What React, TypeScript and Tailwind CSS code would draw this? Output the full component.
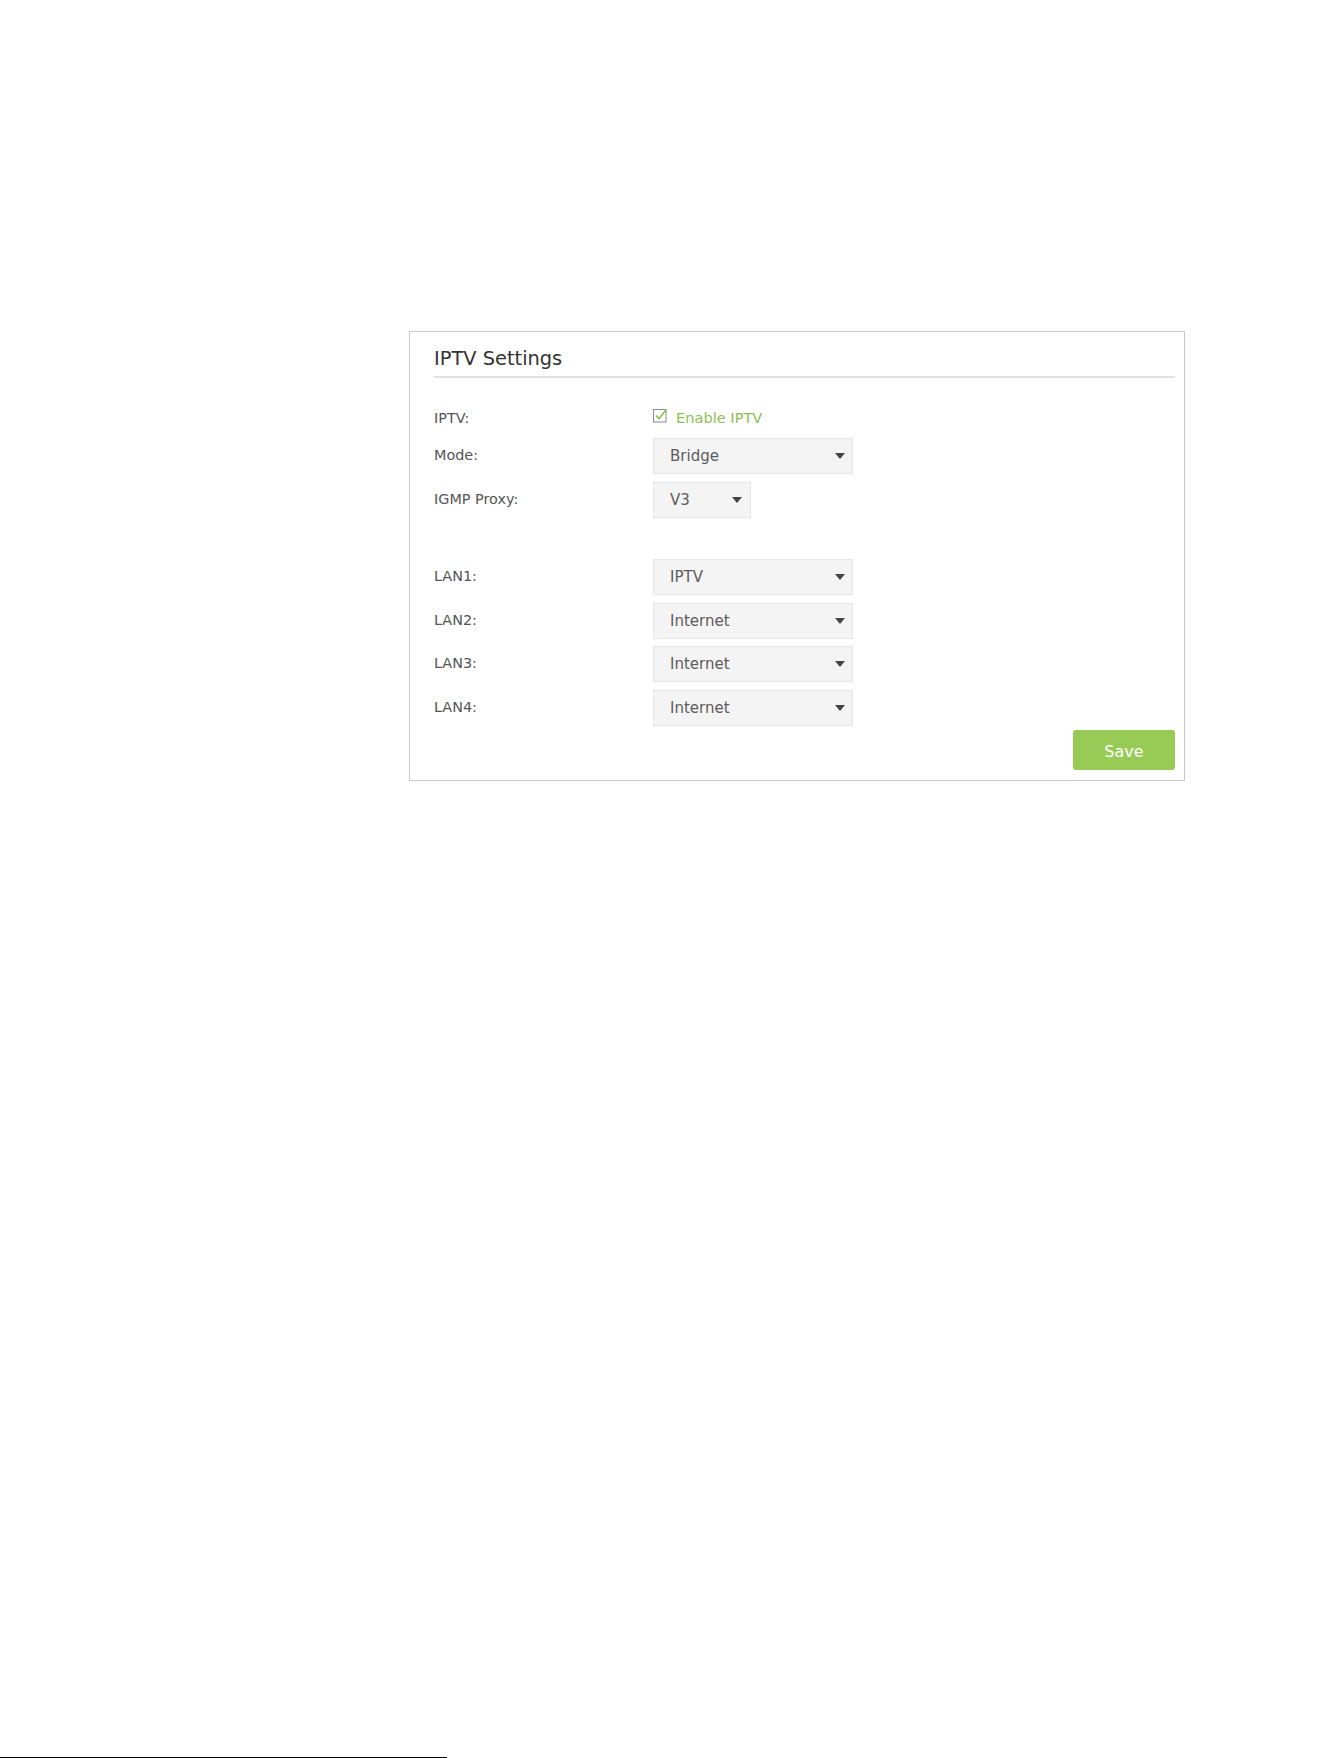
import React from "react";

const font = { fontFamily: '"DejaVu Sans", Verdana, sans-serif' };

function Arrow() {
  return (
    <svg width="10" height="6" viewBox="0 0 10 6" className="shrink-0">
      <path d="M0 0 L10 0 L5 6 Z" fill="#444" />
    </svg>
  );
}

function Select({ value, wide = true }: { value: string; wide?: boolean }) {
  return (
    <div
      className={`flex h-[36px] items-center justify-between border border-[#e6e6e6] bg-[#f4f4f4] pl-[16px] ${
        wide ? "w-[200px] pr-[7px]" : "w-[98px] pr-[8px]"
      }`}
    >
      <span className="text-[15px] text-[#5c5c5c]">{value}</span>
      <Arrow />
    </div>
  );
}

function Row({ label, children, className = "" }: { label: string; children: React.ReactNode; className?: string }) {
  return (
    <div className={`flex h-[36px] items-center ${className}`}>
      <div className="w-[219px] shrink-0 text-[14.4px] text-[#555]">{label}</div>
      {children}
    </div>
  );
}

export default function App() {
  return (
    <div className="flex h-[1758px] flex-col bg-white" style={font}>
      <div className="ml-[409px] mt-[331px] flex w-[776px] flex-col border border-[#c9c9c9] pb-[10px] pl-[24px] pr-[9px] pt-[15px]">
        <div className="h-[24px] text-[19.4px] leading-[24px] text-[#333]">IPTV Settings</div>
        <div className="mt-[5px] h-[2px] bg-[#e2e2e2]" />
        <div className="mt-[30px] flex h-[20px] items-start leading-[20px]">
          <div className="w-[219px] shrink-0 text-[14.4px] text-[#555]">IPTV:</div>
          <svg width="15" height="15" viewBox="0 0 15 15" className="shrink-0">
            <rect x="0.5" y="1.5" width="12.5" height="12.5" fill="none" stroke="#8a8a8a" strokeWidth="1" />
            <path d="M3 7.5 L6 10.5 L13 2" fill="none" stroke="#8cc152" strokeWidth="1.7" />
          </svg>
          <span className="ml-[8px] text-[14.6px] text-[#8cc152]">Enable IPTV</span>
        </div>
        <Row label="Mode:" className="mt-[10px]">
          <Select value="Bridge" />
        </Row>
        <Row label="IGMP Proxy:" className="mt-[8px]">
          <Select value="V3" wide={false} />
        </Row>
        <Row label="LAN1:" className="mt-[41px]">
          <Select value="IPTV" />
        </Row>
        <Row label="LAN2:" className="mt-[8px]">
          <Select value="Internet" />
        </Row>
        <Row label="LAN3:" className="mt-[7px]">
          <Select value="Internet" />
        </Row>
        <Row label="LAN4:" className="mt-[8px]">
          <Select value="Internet" />
        </Row>
        <div className="mt-[4px] flex justify-end">
          <button className="flex h-[40px] w-[102px] items-center justify-center rounded-[3px] bg-[#97cb56] pt-[3px] text-[16px] text-white">
            Save
          </button>
        </div>
      </div>
      <div className="mt-auto h-[1px] w-[447px] bg-black" />
    </div>
  );
}
